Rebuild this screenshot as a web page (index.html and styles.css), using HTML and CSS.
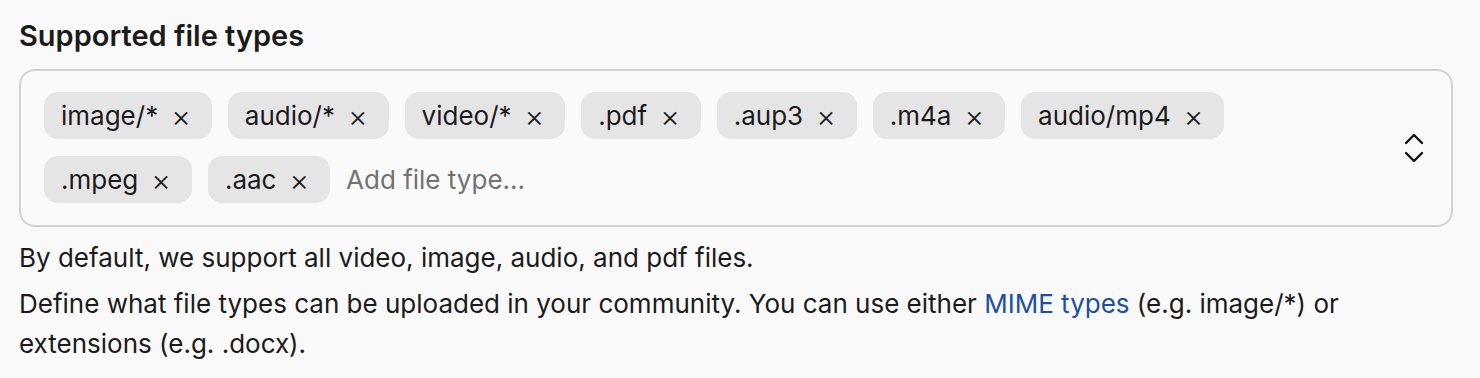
FILE: index.html
```html
<!DOCTYPE html>
<html lang="en">
<head>
    <meta charset="UTF-8">
    <title>Supported file types</title>
    <link rel="stylesheet" href="styles.css">
</head>
<body>
    <div class="field">
        <label class="field-label" for="file-type-input">Supported file types</label>

        <!-- tag input -->
        <div class="tag-box">
            <div class="tag-list">
                <span class="tag">image/* <span class="tag-x">×</span></span>
                <span class="tag">audio/* <span class="tag-x">×</span></span>
                <span class="tag">video/* <span class="tag-x">×</span></span>
                <span class="tag">.pdf <span class="tag-x">×</span></span>
                <span class="tag">.aup3 <span class="tag-x">×</span></span>
                <span class="tag">.m4a <span class="tag-x">×</span></span>
                <span class="tag">audio/mp4 <span class="tag-x">×</span></span>
                <span class="tag">.mpeg <span class="tag-x">×</span></span>
                <span class="tag">.aac <span class="tag-x">×</span></span>
                <input id="file-type-input" class="tag-input" type="text" placeholder="Add file type...">
            </div>
            <svg class="chevrons" width="22" height="32" viewBox="0 0 22 32" fill="none" stroke="#111" stroke-width="2.4" stroke-linecap="round" stroke-linejoin="round">
                <path d="M3 11 L11 3 L19 11"/>
                <path d="M3 21 L11 29 L19 21"/>
            </svg>
        </div>

        <p class="hint">By default, we support all video, image, audio, and pdf files.</p>
        <p class="hint">Define what file types can be uploaded in your community. You can use either <a href="#">MIME types</a> (e.g. image/*) or extensions (e.g. .docx).</p>
    </div>
</body>
</html>
```

FILE: styles.css
```css
body {
    margin: 0;
    background-color: #faf9fa;
    font-family: 'Inter', 'Noto Sans', sans-serif;
    color: #1b1b1b;
}

.field {
    padding: 18px 27px 0 19px;
}

.field-label {
    display: block;
    font-size: 29px;
    font-weight: 600;
    line-height: 36px;
    margin-bottom: 15px;
}

/* tag input box */
.tag-box {
    display: flex;
    align-items: center;
    border: 2px solid #d3d2d3;
    border-radius: 16px;
    padding: 21px 26px 22px 23px;
    background-color: #fbfafb;
}

.tag-list {
    flex: 1;
    display: flex;
    flex-wrap: wrap;
    gap: 17px 16px;
}

.tag {
    display: flex;
    align-items: center;
    gap: 13px;
    height: 47px;
    padding: 0 21px 0 17px;
    border-radius: 14px;
    background-color: #e6e5e6;
    font-size: 26px;
}

.tag-x {
    font-size: 30px;
    font-weight: 300;
    line-height: 1;
    color: #222;
}

.tag-input {
    border: none;
    outline: none;
    background: transparent;
    font-family: inherit;
    font-size: 26px;
    height: 47px;
    padding: 0;
    width: 300px;
    color: #1b1b1b;
}
.tag-input::placeholder {
    color: #727172;
}

.chevrons {
    flex: none;
    margin-left: 40px;
}

/* hints under the box */
.hint {
    margin: 6px 0 0;
    font-size: 26px;
    line-height: 40px;
}
.hint:first-of-type {
    margin-top: 11px;
}
.hint a {
    color: #1d4fa3;
    text-decoration: none;
}
```
